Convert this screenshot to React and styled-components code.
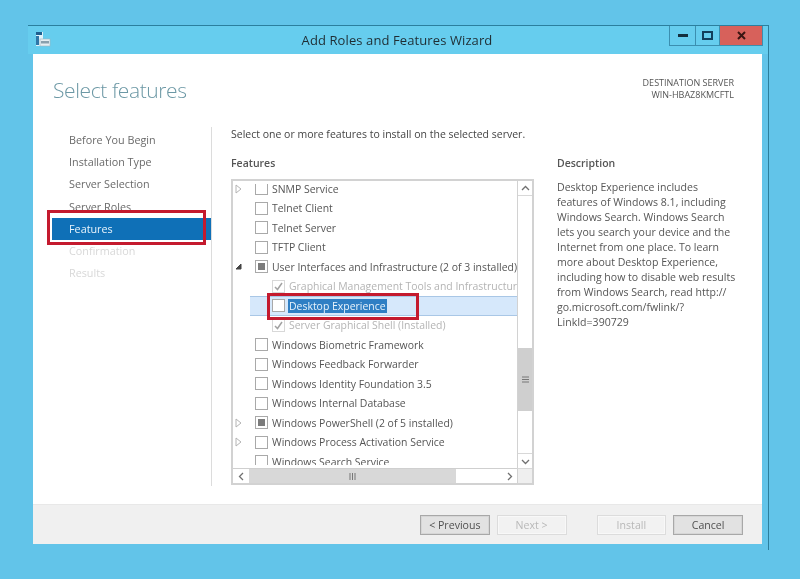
import React from "react";
import styled, { createGlobalStyle } from "styled-components";

const Global = createGlobalStyle`
  html, body { margin: 0; padding: 0; background: #62c4e9; }
  body { width: 800px; height: 579px; overflow: hidden; font-family: "Open Sans", "Noto Sans", sans-serif; }
  * { box-sizing: border-box; }
`;

const Page = styled.div`
  width: 800px;
  height: 579px;
  padding: 25px 0 0 28px;
  background: #62c4e9;
  filter: blur(0.5px);
`;

const Win = styled.div`
  width: 741px;
  height: 525px;
  display: flex;
  flex-direction: column;
  border-top: 1px solid #2b7f9e;
  border-right: 1px solid #2b7f9e;
`;

const TitleBar = styled.div`
  height: 28px;
  flex: none;
  display: flex;
  align-items: flex-start;
  background: #66cdee;
  padding-left: 7px;
`;

const AppIcon = styled.svg`
  width: 16px;
  height: 17px;
  margin-top: 5px;
  flex: none;
`;

const Title = styled.div`
  flex: 1;
  text-align: center;
  font-size: 13px;
  line-height: 28px;
  color: #1f2d33;
  padding-left: 74px;
  letter-spacing: 0.1px;
`;

const Controls = styled.div`
  display: flex;
  height: 20px;
  margin-right: 5px;
  border: 1px solid #3b8fb0;
  border-top: none;
`;

const Control = styled.div`
  width: ${p => p.$w}px;
  display: flex;
  align-items: center;
  justify-content: center;
  background: ${p => p.$close ? "#d7615b" : "transparent"};
  border-left: ${p => p.$first ? "none" : "1px solid #3b8fb0"};
`;

const Client = styled.div`
  width: 729px;
  height: 490px;
  margin-left: 5px;
  display: flex;
  flex-direction: column;
  background: #fff;
`;

const Header = styled.div`
  height: 73px;
  flex: none;
  display: flex;
  justify-content: space-between;
  align-items: flex-start;
  padding: 0 28px 0 20px;
`;

const Heading = styled.h1`
  margin: 19px 0 0;
  font-size: 21px;
  font-weight: 300;
  line-height: 34px;
  letter-spacing: -0.4px;
  color: #6c98a5;
`;

const Server = styled.div`
  margin-top: 23px;
  text-align: right;
  font-size: 9px;
  line-height: 12px;
  color: #555;
`;

const Main = styled.div`
  height: 359px;
  flex: none;
  display: flex;
`;

const Nav = styled.nav`
  width: 179px;
  flex: none;
  padding-top: 2px;
  border-right: 1px solid #dcdcdc;
`;

const NavItem = styled.div`
  position: relative;
  height: 22.2px;
  margin-left: 19px;
  padding-left: 17px;
  font-size: 10.8px;
  line-height: 22px;
  background: ${p => p.$active ? "#0f70b7" : "transparent"};
  color: ${p => p.$active ? "#e8f3fb" : p.$off ? "#d8d8d8" : "#6a6a6a"};
`;

const RedBox = styled.div`
  position: absolute;
  top: ${p => p.$t}px;
  left: ${p => p.$l}px;
  width: ${p => p.$w}px;
  height: ${p => p.$h}px;
  border: 3px solid #c41a2e;
  pointer-events: none;
  z-index: 2;
`;

const Center = styled.section`
  width: 322px;
  flex: none;
  padding-left: 19px;
  display: flex;
  flex-direction: column;
`;

const Intro = styled.div`
  height: 14px;
  font-size: 10.5px;
  line-height: 14px;
  color: #444;
`;

const Label = styled.div`
  margin-top: ${p => p.$t}px;
  font-size: 10.5px;
  line-height: 14px;
  font-weight: 600;
  color: #555;
`;

const ListBox = styled.div`
  margin-top: 9px;
  width: 303px;
  height: 306px;
  border: 2px solid #d2d2d2;
  display: grid;
  grid-template-columns: 1fr 15px;
  grid-template-rows: 1fr 15px;
`;

const Viewport = styled.div`
  overflow: hidden;
  margin: 3px 0;
  background: #fff;
`;

const Rows = styled.div`
  margin-top: -5px;
`;

const Row = styled.div`
  height: 19.5px;
  display: flex;
  align-items: center;
`;

const Gutter = styled.div`
  width: 17px;
  flex: none;
  display: flex;
  justify-content: center;
  padding-right: 6px;
`;

const RowBody = styled.div`
  position: relative;
  flex: 1;
  min-width: 0;
  height: 100%;
  display: flex;
  align-items: center;
  padding-left: ${p => 5 + p.$level * 17}px;
  background: ${p => p.$selected ? "#d6e8fb" : "transparent"};
  box-shadow: ${p => p.$selected ? "inset 0 1px 0 #a9c7e6, inset 0 -1px 0 #a9c7e6" : "none"};
`;

const Box = styled.div`
  width: 13px;
  height: 13px;
  flex: none;
  border: 1px solid ${p => p.$off ? "#d8d8d8" : "#a9a9a9"};
  background: #fff;
  display: flex;
  align-items: center;
  justify-content: center;
`;

const Fill = styled.div`
  width: 7px;
  height: 7px;
  background: #7c7c7c;
`;

const RowText = styled.span`
  margin-left: 3px;
  padding: 0 1px;
  font-size: 10.45px;
  line-height: 14px;
  white-space: nowrap;
  color: ${p => p.$off ? "#b4b4b4" : p.$selected ? "#e8f3fb" : "#555"};
  background: ${p => p.$selected ? "#2f7fc4" : "transparent"};
`;

const VScroll = styled.div`
  display: flex;
  flex-direction: column;
  border-left: 1px solid #d2d2d2;
  background: #fff;
`;

const ScrollBtn = styled.div`
  width: ${p => p.$h ? "16px" : "100%"};
  height: ${p => p.$h ? "100%" : "15px"};
  flex: none;
  display: flex;
  align-items: center;
  justify-content: center;
  background: #fff;
  border: 0 solid #d8d8d8;
  border-bottom-width: ${p => p.$up ? "1px" : "0"};
  border-top-width: ${p => p.$down ? "1px" : "0"};
`;

const VSpace = styled.div`
  height: ${p => p.$h}px;
  flex: ${p => p.$h ? "none" : 1};
`;

const VThumb = styled.div`
  height: 63px;
  flex: none;
  background: #cfcfcf;
  display: flex;
  align-items: center;
  justify-content: center;
`;

const HScroll = styled.div`
  display: flex;
  border-top: 1px solid #cfcfcf;
  background: #fff;
`;

const HThumb = styled.div`
  width: 207px;
  flex: none;
  background: #d8d8d8;
  display: flex;
  align-items: center;
  justify-content: center;
`;

const HSpace = styled.div`
  flex: 1;
`;

const Corner = styled.div`
  background: #efefef;
  border-top: 1px solid #d8d8d8;
  border-left: 1px solid #d2d2d2;
`;

const Grip = styled.svg`
  display: block;
`;

const Side = styled.aside`
  flex: 1;
  padding: 29px 20px 0 23px;
`;

const DescLabel = styled(Label)`
  margin-top: 0;
`;

const DescText = styled.p`
  margin: 10px 0 0;
  font-size: 10.55px;
  line-height: 15px;
  color: #555;
  white-space: nowrap;
`;

const Footer = styled.footer`
  margin-top: 18px;
  height: 40px;
  flex: none;
  display: flex;
  align-items: center;
  padding: 0 19px 0 387px;
  background: #f0f0f0;
  border-top: 1px solid #e8e8e8;
`;

const Btn = styled.div`
  width: ${p => p.$w || 70}px;
  height: 20px;
  margin-left: ${p => p.$gap || 0}px;
  display: flex;
  align-items: center;
  justify-content: center;
  font-size: 10.6px;
  border: 1px solid ${p => p.$off ? "#dcdcdc" : "#a8a8a8"};
  background: ${p => p.$off ? "#f2f2f2" : "#e2e2e2"};
  color: ${p => p.$off ? "#b8b8b8" : "#505050"};
  box-shadow: ${p => p.$off ? "inset 0 0 0 1px #f8f8f8" : "inset 0 0 0 1px #d6d6d6"};
`;

const Closed = () => (
  <svg width="7" height="10" viewBox="0 0 7 10"><path d="M1 1 L6 5 L1 9 Z" fill="#fff" stroke="#b4b4b4" /></svg>
);
const Open = () => (
  <svg width="7" height="7" viewBox="0 0 7 7"><path d="M6 1 V6 H1 Z" fill="#444" stroke="#444" /></svg>
);
const Tick = () => (
  <svg width="11" height="11" viewBox="0 0 11 11"><path d="M2 6 L4.5 8.5 L9 2" fill="none" stroke="#a2a2a2" strokeWidth="1.5" /></svg>
);
const Chevron = ({ d }) => (
  <svg width="9" height="9" viewBox="0 0 9 9"><path d={d} fill="none" stroke="#707070" strokeWidth="1.3" /></svg>
);

const rows = [
  { t: "SNMP Service", e: "closed" },
  { t: "Telnet Client" },
  { t: "Telnet Server" },
  { t: "TFTP Client" },
  { t: "User Interfaces and Infrastructure (2 of 3 installed)", e: "open", c: "part" },
  { t: "Graphical Management Tools and Infrastructure (Installed)", l: 1, c: "tick", off: true },
  { t: "Desktop Experience", l: 1, sel: true },
  { t: "Server Graphical Shell (Installed)", l: 1, c: "tick", off: true },
  { t: "Windows Biometric Framework" },
  { t: "Windows Feedback Forwarder" },
  { t: "Windows Identity Foundation 3.5" },
  { t: "Windows Internal Database" },
  { t: "Windows PowerShell (2 of 5 installed)", e: "closed", c: "part" },
  { t: "Windows Process Activation Service", e: "closed" },
  { t: "Windows Search Service" },
];

const steps = [
  { t: "Before You Begin" },
  { t: "Installation Type" },
  { t: "Server Selection" },
  { t: "Server Roles" },
  { t: "Features", active: true },
  { t: "Confirmation", off: true },
  { t: "Results", off: true },
];

const description = [
  "Desktop Experience includes",
  "features of Windows 8.1, including",
  "Windows Search. Windows Search",
  "lets you search your device and the",
  "Internet from one place. To learn",
  "more about Desktop Experience,",
  "including how to disable web results",
  "from Windows Search, read http://",
  "go.microsoft.com/fwlink/?",
  "LinkId=390729",
];

export default function App() {
  return (
    <>
      <Global />
      <Page>
        <Win>
          <TitleBar>
            <AppIcon viewBox="0 0 16 17">
              <rect x="1" y="1" width="7" height="14" fill="#dff3fb" />
              <rect x="1" y="1" width="6" height="3" fill="#1f5f8f" />
              <rect x="1" y="5" width="3" height="9" fill="#2f77a8" />
              <rect x="5" y="8" width="10" height="7" fill="#e6eef2" stroke="#9fb4bf" strokeWidth="0.6" />
              <rect x="6" y="10" width="8" height="2.5" fill="#8aa0ad" />
            </AppIcon>
            <Title>Add Roles and Features Wizard</Title>
            <Controls>
              <Control $w={25} $first>
                <svg width="10" height="4" viewBox="0 0 10 4"><rect width="10" height="3" fill="#14303f" /></svg>
              </Control>
              <Control $w={24}>
                <svg width="11" height="9" viewBox="0 0 11 9"><rect x="1" y="1" width="9" height="7" fill="none" stroke="#123f5c" strokeWidth="2" /></svg>
              </Control>
              <Control $w={43} $close>
                <svg width="9" height="9" viewBox="0 0 9 9"><path d="M1 1 L8 8 M8 1 L1 8" stroke="#3a1512" strokeWidth="2" /></svg>
              </Control>
            </Controls>
          </TitleBar>
          <Client>
            <Header>
              <Heading>Select features</Heading>
              <Server>DESTINATION SERVER<br />WIN-HBAZ8KMCFTL</Server>
            </Header>
            <Main>
              <Nav>
                {steps.map(s => (
                  <NavItem key={s.t} $active={s.active} $off={s.off}>
                    {s.t}
                    {s.active && <RedBox $t={-8} $l={-5} $w={159} $h={35} />}
                  </NavItem>
                ))}
              </Nav>
              <Center>
                <Intro>Select one or more features to install on the selected server.</Intro>
                <Label $t={15}>Features</Label>
                <ListBox>
                  <Viewport>
                    <Rows>
                      {rows.map(r => (
                        <Row key={r.t}>
                          <Gutter>
                            {r.e === "closed" && <Closed />}
                            {r.e === "open" && <Open />}
                          </Gutter>
                          <RowBody $level={r.l || 0} $selected={r.sel}>
                            <Box $off={r.off}>
                              {r.c === "part" && <Fill />}
                              {r.c === "tick" && <Tick />}
                            </Box>
                            <RowText $off={r.off} $selected={r.sel}>{r.t}</RowText>
                            {r.sel && <RedBox $t={-3} $l={17} $w={152} $h={27} />}
                          </RowBody>
                        </Row>
                      ))}
                    </Rows>
                  </Viewport>
                  <VScroll>
                    <ScrollBtn $up><Chevron d="M1 6 L4.5 2.5 L8 6" /></ScrollBtn>
                    <VSpace $h={152} />
                    <VThumb>
                      <Grip width="7" height="7" viewBox="0 0 7 7"><path d="M0 1 H7 M0 3.5 H7 M0 6 H7" stroke="#777" /></Grip>
                    </VThumb>
                    <VSpace />
                    <ScrollBtn $down><Chevron d="M1 3 L4.5 6.5 L8 3" /></ScrollBtn>
                  </VScroll>
                  <HScroll>
                    <ScrollBtn $h><Chevron d="M6 1 L2.5 4.5 L6 8" /></ScrollBtn>
                    <HThumb>
                      <Grip width="7" height="7" viewBox="0 0 7 7"><path d="M1 0 V7 M3.5 0 V7 M6 0 V7" stroke="#777" /></Grip>
                    </HThumb>
                    <HSpace />
                    <ScrollBtn $h><Chevron d="M3 1 L6.5 4.5 L3 8" /></ScrollBtn>
                  </HScroll>
                  <Corner />
                </ListBox>
              </Center>
              <Side>
                <DescLabel>Description</DescLabel>
                <DescText>
                  {description.map(line => <React.Fragment key={line}>{line}<br /></React.Fragment>)}
                </DescText>
              </Side>
            </Main>
            <Footer>
              <Btn>&lt; Previous</Btn>
              <Btn $gap={7} $off>Next &gt;</Btn>
              <Btn $gap={30} $off>Install</Btn>
              <Btn $gap={7}>Cancel</Btn>
            </Footer>
          </Client>
        </Win>
      </Page>
    </>
  );
}
